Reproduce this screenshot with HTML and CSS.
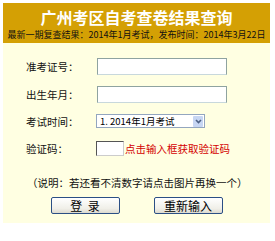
FILE: index.html
```html
<!DOCTYPE html>
<html>
<head>
    <title>广州考区自考查卷结果查询</title>
    <link rel="stylesheet" href="styles.css">
</head>
<body>
    <div class="panel">
        <div class="header">
            <div class="title">广州考区自考查卷结果查询</div>
            <div class="subtitle">最新一期复查结果：2014年1月考试，发布时间：2014年3月22日</div>
        </div>
        <form class="form">
            <div class="row">
                <label class="label">准考证号：</label>
                <input type="text" class="field">
            </div>
            <div class="row">
                <label class="label">出生年月：</label>
                <input type="text" class="field">
            </div>
            <div class="row row-short">
                <label class="label">考试时间：</label>
                <div class="select">
                    <span class="select-text">1.&nbsp;2014年1月考试</span>
                    <span class="select-arrow">
                        <svg width="9" height="11" viewBox="0 0 9 11">
                            <path d="M2 4 L4.5 6.5 L7 4" fill="none" stroke="#4d6185" stroke-width="1.6"/>
                        </svg>
                    </span>
                </div>
            </div>
            <div class="row">
                <label class="label">验证码：</label>
                <input type="text" class="code">
                <span class="hint">点击输入框获取验证码</span>
            </div>
            <div class="note">（说明：若还看不清数字请点击图片再换一个）</div>
            <div class="buttons">
                <button type="submit" class="btn">登&nbsp;&nbsp;录</button>
                <button type="reset" class="btn">重新输入</button>
            </div>
        </form>
    </div>
</body>
</html>
```

FILE: styles.css
```css
body {
    margin: 0;
    padding: 3px;
    background-color: #fff;
    font-family: "Noto Sans CJK SC", "Liberation Sans", sans-serif;
}

.panel {
    width: 267px;
}

.header {
    background-color: #d4a004;
    height: 40px;
    text-align: center;
}

.title {
    color: #fff;
    font-size: 16px;
    font-weight: bold;
    line-height: 16px;
    padding-top: 6px;
    height: 20px;
}

.subtitle {
    color: #111;
    font-size: 9px;
    line-height: 12px;
    white-space: nowrap;
}

.form {
    background-color: #ffffe2;
    margin: 0;
    padding: 9px 0 9px 23px;
}

.row {
    display: flex;
    align-items: center;
    height: 28px;
}

.row-short {
    height: 26px;
}

.label {
    width: 70px;
    font-size: 10.5px;
    color: #111;
}

.field {
    box-sizing: border-box;
    width: 130px;
    height: 17px;
    margin: 0 0 0 1px;
    padding: 0;
    border: 1px solid #8fa3a0;
    border-bottom-color: #c8d8dc;
    background-color: #fff;
}

.select {
    box-sizing: border-box;
    display: flex;
    align-items: center;
    width: 109px;
    height: 14px;
    border: 1px solid #93a6bf;
    background-color: #fff;
}

.select-text {
    flex: 1;
    font-size: 9.5px;
    padding-left: 3px;
    color: #000;
    white-space: nowrap;
}

.select-arrow {
    display: flex;
    align-items: center;
    justify-content: center;
    width: 10px;
    height: 11px;
    margin-right: 1px;
    background-color: #c7d6f3;
    border-radius: 1px;
}

.code {
    box-sizing: border-box;
    width: 28px;
    height: 15px;
    margin: 0;
    padding: 0;
    border: 1px solid #555;
    border-right-color: #ccc;
    border-bottom-color: #ccc;
    background-color: #fff;
}

.hint {
    color: #d40000;
    font-size: 10.5px;
    margin-left: 1px;
}

.note {
    font-size: 10.5px;
    color: #111;
    height: 28px;
    line-height: 28px;
    margin: 7px 0 0 1px;
}

.buttons {
    display: flex;
    justify-content: center;
    gap: 34px;
    margin-left: -23px;
}

.btn {
    width: 69px;
    height: 17px;
    padding: 0;
    font-family: "Noto Sans CJK SC", sans-serif;
    font-size: 12px;
    line-height: 14px;
    color: #000;
    border: 1px solid #2b4f85;
    border-radius: 2px;
    background: linear-gradient(#ffffff, #f0efe8 70%, #dcdad0);
    cursor: pointer;
}
```
